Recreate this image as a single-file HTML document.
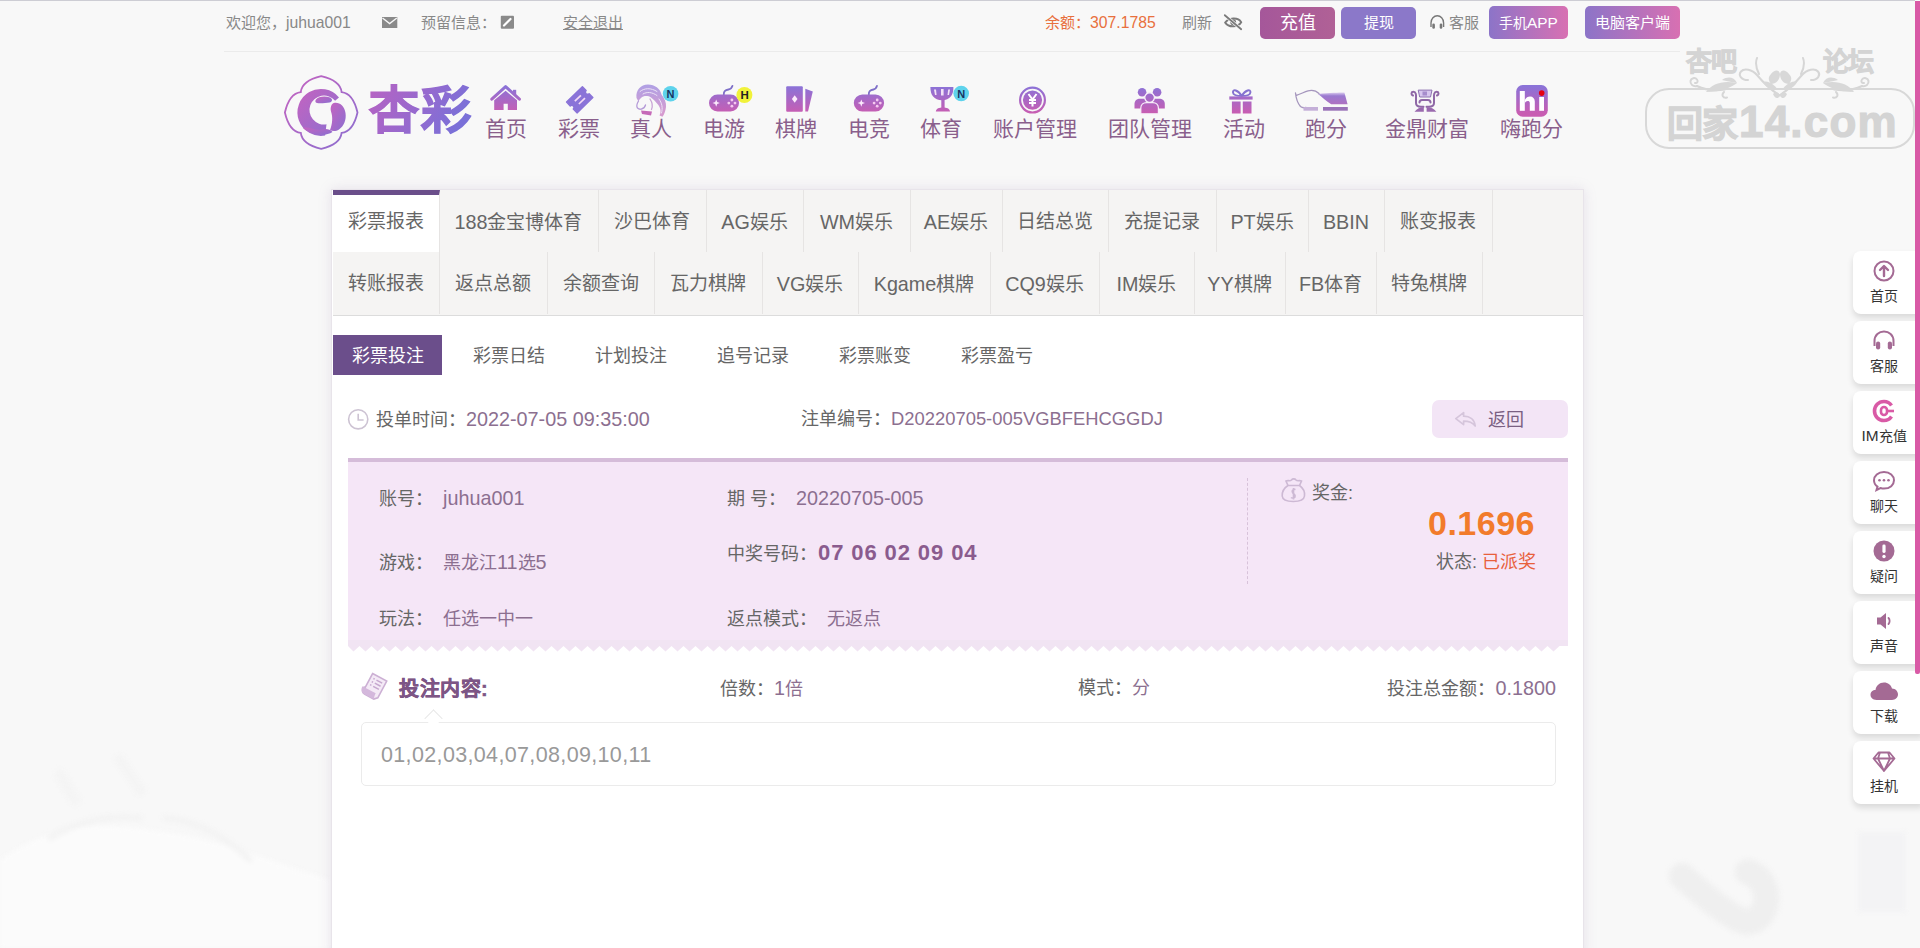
<!DOCTYPE html>
<html lang="zh-CN"><head><meta charset="utf-8">
<style>
*{margin:0;padding:0;box-sizing:border-box}
html,body{width:1920px;height:948px;overflow:hidden}
body{background:#f8f8f8;font-family:"Liberation Sans",sans-serif;position:relative;color:#666}
.a{position:absolute;white-space:nowrap}
#topline{left:0;top:0;width:1915px;height:1px;background:#cdcdd4}
#scroll{left:1915px;top:1px;width:5px;height:673px;background:#d95aa6;border-radius:0 0 2px 2px}
#topbar .a{font-size:15px;line-height:16px;top:15px;color:#888}
#topbar .L{font-size:1.05em}
#hdrline{left:224px;top:51px;width:1456px;height:1px;background:#ebebeb}
.btn{position:absolute;top:7px;height:32px;border-radius:5px;color:#fff;text-align:center;line-height:32px}
/* nav */
.nav{position:absolute;top:118px;font-size:21px;line-height:22px;color:#8a5f8c}
/* panel */
#panel{left:331px;top:189px;width:1253px;height:770px;background:#fff;border:1px solid #e8e4ea;box-shadow:0 0 12px rgba(150,120,170,.18)}
#tabs{left:333px;top:190px;width:1250px;height:126px;background:#f5f4f3;border-bottom:1px solid #dcdcdc}
.tab{position:absolute;height:62px;line-height:64px;font-size:19px;color:#666;text-align:center;border-right:1px solid #e6e4e3}
.sub{position:absolute;top:335px;height:40px;line-height:42px;font-size:18px;color:#666;text-align:center;width:109px}
.tab.act{background:#fff;border-top:5px solid #6a4e8a;line-height:54px}
.sub.act{background:#6b4e8b;color:#fff}
.lbl{font-size:18px;line-height:22px;color:#666}
.pv{color:#8c6f90}
#backbtn{left:1432px;top:400px;width:136px;height:38px;border-radius:7px;background:#f3e5f6;color:#7a5f82;font-size:18px;line-height:40px;padding-left:56px}
#ticket{left:348px;top:458px;width:1220px;height:188px;background:#f5e6f7;border-top:4px solid #d5bcd9}
#zig{left:348px;top:646px;width:1220px;height:8px;background:linear-gradient(135deg,#f5e6f7 50%,transparent 50%) 0 0/10px 8px repeat-x,linear-gradient(225deg,#f5e6f7 50%,transparent 50%) 0 0/10px 8px repeat-x}
.win{font-size:22px;color:#8a5b8e;letter-spacing:.9px;margin-left:1px}
#dash{left:1247px;top:478px;width:0;height:106px;border-left:1px dashed #d8c2da}
#prize{right:385px;top:503px;font-size:34px;line-height:40px;font-weight:bold;color:#f27b2b;letter-spacing:.5px}
#bettitle{left:399px;top:678px;font-size:20px;line-height:22px;font-weight:bold;color:#7d5585;-webkit-text-stroke:.5px #7d5585;letter-spacing:.5px}
#betbox{left:361px;top:722px;width:1195px;height:64px;border:1px solid #ebebeb;border-radius:5px;background:#fff}
#notch{left:426.5px;top:712px;width:13px;height:13px;background:#fff;border-left:1px solid #e8e8e8;border-top:1px solid #e8e8e8;transform:rotate(45deg) scaleY(1.0)}
#nums{left:381px;top:743px;font-size:21.5px;line-height:24px;color:#999;letter-spacing:.35px}
#logotxt{left:366px;top:78px;font-size:52px;line-height:62px;font-weight:900;background:linear-gradient(90deg,#bd62c0,#7a70d6);-webkit-background-clip:text;color:transparent;letter-spacing:-2px}
.side{position:absolute;left:1853px;width:70px;height:63px;background:#fff;border-radius:8px 0 0 8px;box-shadow:0 4px 6px rgba(0,0,0,.12)}
.side>span{position:absolute;left:0;width:62px;top:37px;text-align:center;font-size:14px;line-height:16px;color:#333}
.L{font-size:1.1em}
.tab .L{font-size:1.04em}
</style></head><body>
<svg class="a" style="left:0;top:0;filter:blur(2.5px)" width="1920" height="948" viewBox="0 0 1920 948">
<path d="M1682 876 C1700 892 1720 910 1740 920 C1760 928 1770 905 1765 890 C1762 880 1755 874 1748 872" fill="none" stroke="#efefef" stroke-width="26" stroke-linecap="round"/>
<rect x="1858" y="832" width="48" height="80" fill="#f3f3f5"/>
<path d="M0 860 C40 830 90 820 150 830 C200 835 240 850 330 880 V948 H0Z" fill="#fbfbfb"/>
<path d="M50 838 C80 820 110 815 140 818 M165 818 C190 820 220 832 250 860" fill="none" stroke="#f2f2f2" stroke-width="5" stroke-linecap="round"/>
<path d="M60 775 L75 800 M120 760 L140 790" fill="none" stroke="#f4f4f4" stroke-width="10" stroke-linecap="round"/>
</svg>
<div class="a" id="topline"></div>

<!-- top bar -->
<div id="topbar">
<div class="a" style="left:226px">欢迎您，<span class="L">juhua001</span></div>
<div class="a" style="left:421px">预留信息：</div>
<div class="a" style="left:563px;text-decoration:underline">安全退出</div>
<div class="a" style="left:1045px;color:#e8703e">余额：<span class="L">307.1785</span></div>
<div class="a" style="left:1182px">刷新</div>
<div class="a" style="left:1449px">客服</div>
</div>
<div class="btn" style="left:1260px;width:75px;background:linear-gradient(90deg,#a5579a,#b06196);font-size:18px;line-height:33px">充值</div>
<div class="btn" style="left:1341px;width:75px;background:#8b78c9;font-size:15px">提现</div>
<div class="btn" style="left:1489px;top:6px;height:33px;line-height:33px;width:79px;background:linear-gradient(90deg,#8c74c8,#d870b2);font-size:14px">手机<span class="L">APP</span></div>
<div class="btn" style="left:1585px;top:6px;height:33px;line-height:33px;width:95px;background:linear-gradient(90deg,#8c74c8,#d870b2);font-size:15px">电脑客户端</div>
<div class="a" id="hdrline"></div>
<svg class="a" style="left:0;top:0" width="1500" height="40" viewBox="0 0 1500 40">
<path d="M382 17 H397.3 V28 H382Z" fill="#8a8a8a"/>
<path d="M382.5 18 L389.65 23.6 L396.8 18" fill="none" stroke="#f8f8f8" stroke-width="1.3"/>
<rect x="500.8" y="15.8" width="13.2" height="12.9" rx="1" fill="#8a8a8a"/>
<path d="M504 25.5 L510.5 19" stroke="#fff" stroke-width="2.2" stroke-linecap="round"/>
<path d="M1225.2 22.6 C1228.5 17.6 1238 16.8 1241.2 22.2 C1238.2 27.2 1228.8 28 1225.2 22.6Z" fill="none" stroke="#7a7a7a" stroke-width="1.9"/>
<circle cx="1233.2" cy="22.2" r="2.9" fill="#7a7a7a"/>
<path d="M1224.8 15.2 L1241.2 29.2" stroke="#f8f8f8" stroke-width="3.2"/>
<path d="M1224.8 15.2 L1241.2 29.2" stroke="#7a7a7a" stroke-width="1.8" stroke-linecap="round"/>
<path d="M1431 27 V23 C1431 18.5 1434 15.8 1437.3 15.8 C1440.6 15.8 1443.6 18.5 1443.6 23 V27" fill="none" stroke="#777" stroke-width="1.4"/>
<rect x="1432.3" y="23.5" width="2.6" height="5.2" rx="1.3" fill="#777"/>
<rect x="1439.7" y="23.5" width="2.6" height="5.2" rx="1.3" fill="#777"/>
</svg>



<!-- logo -->
<svg class="a" style="left:281px;top:72px" width="82" height="82" viewBox="0 0 82 82">
<defs>
<linearGradient id="lg1" x1="0" y1="0" x2="1" y2="1"><stop offset="0" stop-color="#c563c0"/><stop offset="1" stop-color="#8b6fd0"/></linearGradient>
<linearGradient id="gv" x1="0" y1="0" x2="0" y2="1"><stop offset="0" stop-color="#9270d2"/><stop offset="1" stop-color="#c660b4"/></linearGradient>
<linearGradient id="gh" x1="0" y1="0" x2="1" y2="0"><stop offset="0" stop-color="#c563c0"/><stop offset="1" stop-color="#7d6fd6"/></linearGradient>
</defs>
<path d="M40.2 4.2 Q59.3 8.6 60.6 20.1 Q72.1 21.4 76.5 40.5 Q72.1 59.6 60.6 60.9 Q59.3 72.4 40.2 76.8 Q21.1 72.4 19.8 60.9 Q8.3 59.6 3.9 40.5 Q8.3 21.4 19.8 20.1 Q21.1 8.6 40.2 4.2Z" fill="none" stroke="url(#lg1)" stroke-width="1.8"/>
<path d="M58.0 25.4 A23.5 23.5 0 1 0 44.1 63.6 L45.5 52.3 A14.5 14.5 0 1 1 54.1 28.7Z" fill="url(#lg1)"/>
<path fill="url(#lg1)" d="M35 27.5 C37 24.5 44 23.8 49 25.5 C52 27 51.5 30 48.5 30.5 C45 31 39 31.5 36 31 C34 30.5 34 28.5 35 27.5Z"/>
<path fill="url(#lg1)" d="M53 31 C58.5 30 63.5 34 64.5 41 C65.5 48 63 54 58 57.5 C55 59.5 51.5 59.5 49 58 C51.5 52 52 45 50 39.5 C49 35.5 50.5 31.5 53 31Z"/>
<path fill="url(#lg1)" d="M22 56 C28 54 34 59 41 57.5 C45 56.5 49 57 51.5 60 C45 64.5 31 64 22 56Z"/>
</svg>
<svg class="a" style="left:366px;top:72px" width="118" height="68"><defs><linearGradient id="lgt" x1="0" y1="0" x2="1" y2="0.3"><stop offset="0" stop-color="#b962c2"/><stop offset="1" stop-color="#7a70d8"/></linearGradient></defs><text x="3" y="55.5" font-size="50" font-weight="700" fill="url(#lgt)" stroke="url(#lgt)" stroke-width="1.3" letter-spacing="2">杏彩</text></svg>
<svg class="a" style="left:0;top:0" width="1600" height="125" viewBox="0 0 1600 125">
<defs>
<linearGradient id="ng" gradientUnits="userSpaceOnUse" x1="0" y1="86" x2="0" y2="113"><stop offset="0" stop-color="#8a73d8"/><stop offset="1" stop-color="#c85db2"/></linearGradient>
<linearGradient id="ngl" gradientUnits="userSpaceOnUse" x1="0" y1="86" x2="0" y2="113"><stop offset="0" stop-color="#a591e0"/><stop offset="1" stop-color="#d08ac8"/></linearGradient>
</defs>
<!-- home -->
<path d="M491.8 99.2 L505.6 86.6 L519.4 99.2" fill="none" stroke="url(#ng)" stroke-width="3" stroke-linecap="round" stroke-linejoin="round"/>
<rect x="513" y="89.8" width="3.2" height="5" fill="url(#ng)"/>
<path d="M494.2 100.2 L505.6 90.8 L517 100.2 V110 H507.8 V103.8 H503.6 V110 H494.2Z" fill="url(#ng)"/>
<!-- ticket -->
<g transform="translate(579.7 99.8) rotate(-44)">
<path d="M-11 -7.5 H11 V-2.2 A2.2 2.2 0 0 0 11 2.2 V7.5 H-11 V2.2 A2.2 2.2 0 0 0 -11 -2.2Z" fill="url(#ng)" stroke="url(#ng)" stroke-width="1.5" stroke-linejoin="round"/>
<rect x="-4.5" y="-3.2" width="8.5" height="1.7" fill="#f3d9f5"/>
<rect x="-3.5" y="1.6" width="8.5" height="1.7" fill="#f3d9f5"/>
</g>
<!-- woman -->
<path opacity=".85" d="M636.5 98 C635.5 90 641 84.5 648 84.6 C655 84.8 660 88.5 661.5 94.5 C664.5 98.5 666.5 102.5 666 107 C665.5 111 664.5 114 662.5 116.8 L659.5 115.5 C661.5 111.5 660.5 107.5 657.5 104 C655.5 101.5 653.5 99.5 651 97.5 C648 95.5 643.5 95.5 641 98 C640 99 639 100 638.5 101.5Z" fill="url(#ngl)"/>
<g fill="none" stroke="#ece2f6" stroke-width="1" stroke-linecap="round">
<path d="M640 91.5 C644 88 651 87.5 657 91.5"/>
<path d="M643 94 C647 91.5 652 92 657 95.5"/>
<path d="M659 99 C662 103 663 108 661.5 113"/>
</g>
<path d="M638.5 101 C637 103.5 636 106 637.5 108 C638.5 109 640 109.5 641.5 109 C643.5 108.5 645 107 645.5 105" fill="none" stroke="#b59bd8" stroke-width="1.3" stroke-linecap="round"/>
<path d="M650 99 C652 102 653 106 651.5 109.5" fill="none" stroke="#c9a3d6" stroke-width="1.3" stroke-linecap="round"/>
<path d="M641 110.5 L652 111.5 L651 115.5 L642 114Z" fill="#c56ab8"/>
<circle cx="670.6" cy="93.8" r="7.8" fill="#5ed3ec"/>
<text x="670.6" y="97.8" font-size="11" font-weight="bold" fill="#173462" text-anchor="middle" font-family="Liberation Sans">N</text>
<!-- gamepad 1 -->
<path d="M723.8 94.5 C723.5 90.5 726 90 728.5 89.5 C731 89 732 87.5 732.5 85.8" fill="none" stroke="#7e6fc8" stroke-width="1.8" stroke-linecap="round"/>
<rect x="709" y="94.4" width="30" height="17" rx="8.5" fill="url(#ng)"/>
<path d="M716.2 99.4 L717.2 102.1 L719.9 103.1 L717.2 104.1 L716.2 106.8 L715.2 104.1 L712.5 103.1 L715.2 102.1Z" fill="#fbe8fb"/>
<g fill="#f6c9f0"><circle cx="731.9" cy="100" r="1.4"/><circle cx="731.9" cy="106.2" r="1.4"/><circle cx="728.8" cy="103.1" r="1.4"/><circle cx="735" cy="103.1" r="1.4"/></g>
<circle cx="744.4" cy="95" r="8" fill="#f1f23a"/>
<text x="744.6" y="99.2" font-size="11.5" font-weight="bold" fill="#222" text-anchor="middle" font-family="Liberation Sans">H</text>
<!-- cards -->
<path d="M805.3 88.8 L812.8 91.5 L808 111.6 L805.3 111.6Z" fill="url(#ng)"/>
<rect x="786.2" y="86.3" width="16.6" height="25.5" rx="1" fill="url(#ng)"/>
<path d="M794.7 95.2 L797.5 99 L794.7 102.8 L791.9 99Z" fill="#fbeafb"/>
<!-- gamepad 2 -->
<path d="M868.8 94.5 C868.5 90.5 871 90 873.5 89.5 C876 89 876.5 87.5 877 85.8" fill="none" stroke="#7e6fc8" stroke-width="1.8" stroke-linecap="round"/>
<rect x="853.8" y="94.4" width="30.3" height="17.2" rx="8.6" fill="url(#ng)"/>
<path d="M861.3 99.4 L862.3 102.1 L865 103.1 L862.3 104.1 L861.3 106.8 L860.3 104.1 L857.6 103.1 L860.3 102.1Z" fill="#fbe8fb"/>
<g fill="#f6c9f0"><circle cx="877.2" cy="100" r="1.4"/><circle cx="877.2" cy="106.2" r="1.4"/><circle cx="874.1" cy="103.1" r="1.4"/><circle cx="880.3" cy="103.1" r="1.4"/></g>
<!-- trophy -->
<path d="M930.4 87.1 H953.4 C953.6 95 950 100.3 942 100.3 C934 100.3 930.2 95 930.4 87.1Z" fill="url(#ng)"/>
<rect x="941.3" y="99" width="3.3" height="9.5" fill="url(#ng)"/>
<path d="M935.8 111.5 C936.5 108.5 939 107.6 942.9 107.6 C946.8 107.6 949.3 108.5 950 111.5Z" fill="url(#ng)"/>
<g fill="#f2e2f6"><path d="M934 89.5 L936 89.5 L936.6 95 L935 95Z"/><rect x="941" y="89" width="2.6" height="6.5"/><path d="M948.2 89.5 L950 89.5 L949 95 L947.5 95Z"/></g>
<circle cx="961.2" cy="93.5" r="7.8" fill="#5ed3ec"/>
<text x="961.2" y="97.5" font-size="11" font-weight="bold" fill="#173462" text-anchor="middle" font-family="Liberation Sans">N</text>
<!-- coin -->
<circle cx="1032.5" cy="100.1" r="12.4" fill="none" stroke="url(#ng)" stroke-width="2.2"/>
<circle cx="1032.5" cy="100.1" r="9.6" fill="url(#ng)"/>
<path d="M1028.5 94 L1032.5 99.5 L1036.5 94 M1032.5 99.5 V106.5 M1029 100 H1036 M1029 103 H1036" fill="none" stroke="#fff" stroke-width="2"/>
<!-- team -->
<g fill="url(#ng)">
<circle cx="1142.1" cy="92.2" r="4.3"/><path d="M1134.5 108.4 V104 C1134.5 100.5 1137 98.8 1140 98.8 H1144 C1146 98.8 1147 99.5 1147.5 100.5 V108.4Z"/>
<circle cx="1157.1" cy="92.2" r="4.3"/><path d="M1164.8 108.4 V104 C1164.8 100.5 1162.3 98.8 1159.3 98.8 H1155 C1153 98.8 1152 99.5 1151.5 100.5 V108.4Z"/>
</g>
<g fill="url(#ng)" stroke="#f8f0fa" stroke-width="1.2">
<circle cx="1149.6" cy="97.6" r="4.8"/>
<path d="M1140.8 113.8 V108 C1140.8 104.5 1143.5 102.6 1146.5 102.6 H1152.8 C1155.8 102.6 1158.4 104.5 1158.4 108 V113.8Z"/>
</g>
<!-- gift -->
<path d="M1241.7 96 C1238 90 1232.5 88.5 1233 92.5 C1233.3 95 1237 96 1241.7 96 C1246.4 96 1250.1 95 1250.4 92.5 C1250.9 88.5 1245.4 90 1241.7 96Z" fill="none" stroke="#8572d0" stroke-width="2"/>
<rect x="1229.3" y="96.4" width="23.3" height="3.2" fill="url(#ng)"/>
<rect x="1231.9" y="101.5" width="8.7" height="12" fill="url(#ng)"/>
<rect x="1242.8" y="101.5" width="8.7" height="12" fill="url(#ng)"/>
<!-- rhino -->
<defs><linearGradient id="rg" gradientUnits="userSpaceOnUse" x1="0" y1="92" x2="0" y2="105"><stop offset="0" stop-color="#e4d8f2"/><stop offset=".3" stop-color="#9a7ad0"/><stop offset="1" stop-color="#b070c0"/></linearGradient></defs>
<path d="M1318 94 C1330 92.8 1338 92.5 1344.4 92.5 L1347.6 104.3 L1331.2 104.3 C1326 101 1322.5 97.5 1318 94Z" fill="url(#rg)"/>
<path d="M1295.5 93 C1296 98 1297.5 103 1300.5 106.5 C1302 107.8 1304 108 1306 107.5 M1296 95.5 C1300 94.5 1304 92 1308 90.8 C1312 89.8 1316 90.5 1319 93.5" fill="none" stroke="#a596bd" stroke-width="1.3" stroke-linecap="round"/>
<path d="M1303.5 107 H1318 V110.7 H1303.5Z" fill="#c4afd8"/>
<path d="M1323 107 H1347.8 V110.7 H1323Z" fill="#9a72b8"/>
<!-- throne -->
<path d="M1418.2 90.1 H1432 L1430.5 97 H1419.7Z" fill="#d7c6ee" stroke="#8d72b0" stroke-width="1"/>
<rect x="1422.5" y="91.5" width="4.5" height="4" fill="#a68ccc"/>
<g fill="none" stroke="#8f68a6" stroke-width="2" stroke-linecap="round">
<path d="M1413 95.5 C1410.8 94.5 1411 91.8 1413.5 91.8 C1416 91.8 1416.2 95 1416 98 V103 C1416 105.5 1418 106.8 1421 106.8 H1423.5"/>
<path d="M1437 95.5 C1439.2 94.5 1439 91.8 1436.5 91.8 C1434 91.8 1433.8 95 1434 98 V103 C1434 105.5 1432 106.8 1429 106.8 H1426.5"/>
<path d="M1419.5 102.5 C1419.5 100.8 1420.5 100 1422 100 H1428 C1429.5 100 1430.5 100.8 1430.5 102.5"/>
</g>
<path d="M1414.5 111.7 C1417 108.5 1420 107.5 1423.8 107 V111.7Z M1436.4 111.7 C1434 108.5 1431 107.5 1426.6 107 V111.7Z" fill="#9a6aae"/>
<!-- hi -->
<rect x="1516.2" y="85.1" width="31.6" height="31.6" rx="6.5" fill="url(#ng)"/>
<rect x="1519.8" y="91" width="5" height="19.8" fill="#fff"/>
<path d="M1524.8 100 C1526 97.5 1528 96.5 1530 96.5 C1533 96.5 1534.8 98.5 1534.8 101.5 V110.8 H1529.8 V103 C1529.8 101.5 1528.8 101 1527.8 101 C1526.5 101 1525.5 101.8 1524.8 103Z" fill="#fff"/>
<rect x="1539.2" y="97" width="4.8" height="13.8" fill="#fff"/>
<circle cx="1541.7" cy="93.1" r="2.8" fill="#e60012"/>
</svg>

<!-- nav labels -->
<div class="nav" style="left:485px">首页</div>
<div class="nav" style="left:558px">彩票</div>
<div class="nav" style="left:630px">真人</div>
<div class="nav" style="left:703px">电游</div>
<div class="nav" style="left:775px">棋牌</div>
<div class="nav" style="left:848px">电竞</div>
<div class="nav" style="left:920px">体育</div>
<div class="nav" style="left:993px">账户管理</div>
<div class="nav" style="left:1108px">团队管理</div>
<div class="nav" style="left:1223px">活动</div>
<div class="nav" style="left:1305px">跑分</div>
<div class="nav" style="left:1385px">金鼎财富</div>
<div class="nav" style="left:1500px">嗨跑分</div>

<!-- panel -->
<div class="a" id="panel"></div>
<div class="a" id="tabs"></div>
<div class="tab act" style="left:333px;top:190px;width:107px">彩票报表</div>
<div class="tab" style="left:439px;top:190px;width:160px"><span class="L">188</span>金宝博体育</div>
<div class="tab" style="left:598px;top:190px;width:109px">沙巴体育</div>
<div class="tab" style="left:706px;top:190px;width:98px"><span class="L">AG</span>娱乐</div>
<div class="tab" style="left:803px;top:190px;width:108px"><span class="L">WM</span>娱乐</div>
<div class="tab" style="left:910px;top:190px;width:93px"><span class="L">AE</span>娱乐</div>
<div class="tab" style="left:1002px;top:190px;width:107px">日结总览</div>
<div class="tab" style="left:1108px;top:190px;width:109px">充提记录</div>
<div class="tab" style="left:1216px;top:190px;width:93px"><span class="L">PT</span>娱乐</div>
<div class="tab" style="left:1308px;top:190px;width:77px"><span class="L">BBIN</span></div>
<div class="tab" style="left:1384px;top:190px;width:109px">账变报表</div>
<div class="tab" style="left:333px;top:252px;width:107px">转账报表</div>
<div class="tab" style="left:439px;top:252px;width:109px">返点总额</div>
<div class="tab" style="left:547px;top:252px;width:108px">余额查询</div>
<div class="tab" style="left:654px;top:252px;width:109px">瓦力棋牌</div>
<div class="tab" style="left:762px;top:252px;width:97px"><span class="L">VG</span>娱乐</div>
<div class="tab" style="left:858px;top:252px;width:133px"><span class="L">Kgame</span>棋牌</div>
<div class="tab" style="left:990px;top:252px;width:110px"><span class="L">CQ9</span>娱乐</div>
<div class="tab" style="left:1099px;top:252px;width:96px"><span class="L">IM</span>娱乐</div>
<div class="tab" style="left:1194px;top:252px;width:92px"><span class="L">YY</span>棋牌</div>
<div class="tab" style="left:1285px;top:252px;width:92px"><span class="L">FB</span>体育</div>
<div class="tab" style="left:1376px;top:252px;width:107px">特兔棋牌</div>
<div class="sub act" style="left:333px">彩票投注</div>
<div class="sub" style="left:454px">彩票日结</div>
<div class="sub" style="left:576px">计划投注</div>
<div class="sub" style="left:698px">追号记录</div>
<div class="sub" style="left:820px">彩票账变</div>
<div class="sub" style="left:942px">彩票盈亏</div>

<!-- order row -->
<div class="a lbl" style="left:376px;top:408px">投单时间：<span class="pv L">2022-07-05 09:35:00</span></div>
<div class="a lbl" style="left:801px;top:408px">注单编号：<span class="pv" style="font-size:18.4px">D20220705-005VGBFEHCGGDJ</span></div>
<div class="a" id="backbtn">返回</div>

<!-- ticket -->
<div class="a" id="ticket"></div>
<svg class="a" style="left:0;top:0;pointer-events:none" width="1600" height="700" viewBox="0 0 1600 700"><path d="M348 640 V646 L353.5 651.5 L359.5 646 L365.5 651.5 L371.5 646 L377.5 651.5 L383.5 646 L389.5 651.5 L395.5 646 L401.5 651.5 L407.5 646 L413.5 651.5 L419.5 646 L425.5 651.5 L431.5 646 L437.5 651.5 L443.5 646 L449.5 651.5 L455.5 646 L461.5 651.5 L467.5 646 L473.5 651.5 L479.5 646 L485.5 651.5 L491.5 646 L497.5 651.5 L503.5 646 L509.5 651.5 L515.5 646 L521.5 651.5 L527.5 646 L533.5 651.5 L539.5 646 L545.5 651.5 L551.5 646 L557.5 651.5 L563.5 646 L569.5 651.5 L575.5 646 L581.5 651.5 L587.5 646 L593.5 651.5 L599.5 646 L605.5 651.5 L611.5 646 L617.5 651.5 L623.5 646 L629.5 651.5 L635.5 646 L641.5 651.5 L647.5 646 L653.5 651.5 L659.5 646 L665.5 651.5 L671.5 646 L677.5 651.5 L683.5 646 L689.5 651.5 L695.5 646 L701.5 651.5 L707.5 646 L713.5 651.5 L719.5 646 L725.5 651.5 L731.5 646 L737.5 651.5 L743.5 646 L749.5 651.5 L755.5 646 L761.5 651.5 L767.5 646 L773.5 651.5 L779.5 646 L785.5 651.5 L791.5 646 L797.5 651.5 L803.5 646 L809.5 651.5 L815.5 646 L821.5 651.5 L827.5 646 L833.5 651.5 L839.5 646 L845.5 651.5 L851.5 646 L857.5 651.5 L863.5 646 L869.5 651.5 L875.5 646 L881.5 651.5 L887.5 646 L893.5 651.5 L899.5 646 L905.5 651.5 L911.5 646 L917.5 651.5 L923.5 646 L929.5 651.5 L935.5 646 L941.5 651.5 L947.5 646 L953.5 651.5 L959.5 646 L965.5 651.5 L971.5 646 L977.5 651.5 L983.5 646 L989.5 651.5 L995.5 646 L1001.5 651.5 L1007.5 646 L1013.5 651.5 L1019.5 646 L1025.5 651.5 L1031.5 646 L1037.5 651.5 L1043.5 646 L1049.5 651.5 L1055.5 646 L1061.5 651.5 L1067.5 646 L1073.5 651.5 L1079.5 646 L1085.5 651.5 L1091.5 646 L1097.5 651.5 L1103.5 646 L1109.5 651.5 L1115.5 646 L1121.5 651.5 L1127.5 646 L1133.5 651.5 L1139.5 646 L1145.5 651.5 L1151.5 646 L1157.5 651.5 L1163.5 646 L1169.5 651.5 L1175.5 646 L1181.5 651.5 L1187.5 646 L1193.5 651.5 L1199.5 646 L1205.5 651.5 L1211.5 646 L1217.5 651.5 L1223.5 646 L1229.5 651.5 L1235.5 646 L1241.5 651.5 L1247.5 646 L1253.5 651.5 L1259.5 646 L1265.5 651.5 L1271.5 646 L1277.5 651.5 L1283.5 646 L1289.5 651.5 L1295.5 646 L1301.5 651.5 L1307.5 646 L1313.5 651.5 L1319.5 646 L1325.5 651.5 L1331.5 646 L1337.5 651.5 L1343.5 646 L1349.5 651.5 L1355.5 646 L1361.5 651.5 L1367.5 646 L1373.5 651.5 L1379.5 646 L1385.5 651.5 L1391.5 646 L1397.5 651.5 L1403.5 646 L1409.5 651.5 L1415.5 646 L1421.5 651.5 L1427.5 646 L1433.5 651.5 L1439.5 646 L1445.5 651.5 L1451.5 646 L1457.5 651.5 L1463.5 646 L1469.5 651.5 L1475.5 646 L1481.5 651.5 L1487.5 646 L1493.5 651.5 L1499.5 646 L1505.5 651.5 L1511.5 646 L1517.5 651.5 L1523.5 646 L1529.5 651.5 L1535.5 646 L1541.5 651.5 L1547.5 646 L1553.5 651.5 L1559.5 646 L1568 646 V640Z" fill="#f1e4f3"/></svg>
<div class="a lbl" style="left:379px;top:487px">账号：<span class="pv L" style="margin-left:10px">juhua001</span></div>
<div class="a lbl" style="left:379px;top:551px">游戏：<span class="pv" style="margin-left:10px">黑龙江<span class="L">11</span>选<span class="L">5</span></span></div>
<div class="a lbl" style="left:379px;top:608px">玩法：<span class="pv" style="margin-left:10px">任选一中一</span></div>
<div class="a lbl" style="left:727px;top:487px">期 号：<span class="pv L" style="margin-left:10px">20220705-005</span></div>
<div class="a lbl" style="left:727px;top:542px">中奖号码：<b class="win">07 06 02 09 04</b></div>
<div class="a lbl" style="left:727px;top:608px">返点模式：<span class="pv" style="margin-left:10px">无返点</span></div>
<div class="a" id="dash"></div>
<div class="a lbl" style="left:1312px;top:482px">奖金:</div>
<div class="a" id="prize">0.1696</div>
<div class="a lbl" style="right:384px;top:551px">状态: <span style="color:#e8603c">已派奖</span></div>

<!-- bet content -->

<svg class="a" style="left:0;top:0" width="1600" height="720" viewBox="0 0 1600 720">
<circle cx="358.2" cy="419.3" r="9.6" fill="none" stroke="#cdc3d3" stroke-width="1.6"/>
<path d="M358.2 413.8 V420 H363.6" fill="none" stroke="#cdc3d3" stroke-width="1.6"/>
<path d="M1455.8 418.6 L1463.6 412.6 V416.2 C1470 416.2 1474.6 419.6 1475.2 426 C1472.6 422.6 1469 421.2 1463.6 421.2 V424.6 Z" fill="none" stroke="#d5c5db" stroke-width="1.7" stroke-linejoin="round"/>
<g fill="none" stroke="#cdb9d4" stroke-width="1.6">
<path d="M1288 485.5 L1286 481 C1288 480 1290 481.5 1291.5 480 C1292.5 478.5 1295 478.5 1296 480 C1297.5 481.5 1299.5 480 1301.5 481 L1299.5 485.5"/>
<path d="M1288 485.5 H1299.5 C1303 488 1305 492 1304.5 496 C1304 500 1300 501.5 1293.3 501.5 C1286.5 501.5 1282.5 500 1282.2 496 C1282 492 1284 488 1288 485.5Z"/>
<path d="M1295.5 489.5 C1293 489 1291.5 490.5 1292.5 492.5 C1293.5 494 1296 494.5 1295 497 C1294 498.5 1291.5 498 1291 497.5 M1293.5 488 V499.5"/>
</g>
<g transform="translate(374.5 687) rotate(28)">
<path d="M-8 -11 H8 V8 L5 11 H-5 C-8 11 -9 9 -9 7 V5 H-8Z" fill="#f4eaf6" stroke="#ccb0d4" stroke-width="1.6"/>
<path d="M-11 5 H4 C4 8 4.5 10.5 6 11 H-6 C-9 11 -11 9 -11 5Z" fill="#d4b8dc"/>
<g stroke="#c6a8cf" stroke-width="1.5"><path d="M-5 -7 H-3.5 M-1.5 -7 H5 M-5 -3.5 H-3.5 M-1.5 -3.5 H5 M-5 0 H-3.5 M-1.5 0 H5"/></g>
</g>
</svg>
<div class="a" id="bettitle">投注内容:</div>
<div class="a lbl" style="left:720px;top:677px">倍数：<span class="pv"><span class="L">1</span>倍</span></div>
<div class="a lbl" style="left:1078px;top:677px">模式：<span class="pv">分</span></div>
<div class="a lbl" style="right:364px;top:677px">投注总金额：<span class="pv L">0.1800</span></div>
<div class="a" id="betbox"></div>
<div class="a" id="notch"></div>
<div class="a" id="nums">01,02,03,04,07,08,09,10,11</div>


<!-- watermark -->
<div class="a" style="left:1686px;top:46px;font-size:26px;line-height:32px;font-weight:bold;color:#d4d4d4;-webkit-text-stroke:1px #d4d4d4;letter-spacing:-1px">杏吧</div>
<div class="a" style="left:1823px;top:46px;font-size:26px;line-height:32px;font-weight:bold;color:#d4d4d4;-webkit-text-stroke:1px #d4d4d4;letter-spacing:-1px">论坛</div>
<svg class="a" style="left:1640px;top:50px" width="280" height="55" viewBox="1640 50 280 55">
<g fill="none" stroke="#d6d6d6" stroke-width="2" stroke-linecap="round">
<path d="M1697 86 C1693 87 1690 84 1690.5 81 C1691 78 1695 77 1697 79.5 C1698.5 81.5 1697 83.5 1695 83"/>
<path d="M1862 86 C1866 87 1869 84 1868.5 81 C1868 78 1864 77 1862 79.5 C1860.5 81.5 1862 83.5 1864 83"/>
<path d="M1697 86 C1705 90 1715 91 1725 89.5 M1862 86 C1854 90 1844 91 1834 89.5"/>
<path d="M1748 80 C1741 80 1738 75 1741 71.5 C1744 68 1752 69 1757 75 C1762 81 1768 88 1779 95"/>
<path d="M1811 80 C1818 80 1821 75 1818 71.5 C1815 68 1807 69 1802 75 C1797 81 1791 88 1780 95"/>
<path d="M1759 74 C1756 68 1755 63 1757 58 M1801 74 C1804 68 1805 63 1803 58"/>
<path d="M1724 92 C1721 95 1723 98.5 1727 97.5 M1836 92 C1839 95 1837 98.5 1833 97.5"/>
</g>
<g fill="#d8d8d8">
<path d="M1706 92 C1712 83 1724 80 1737 83 C1732 87 1722 92 1706 92Z"/>
<path d="M1722 80 C1728 76 1734 77 1737 83 C1731 82 1726 81 1722 80Z"/>
<path d="M1854 92 C1848 83 1836 80 1823 83 C1828 87 1838 92 1854 92Z"/>
<path d="M1838 80 C1832 76 1826 77 1823 83 C1829 82 1834 81 1838 80Z"/>
<path d="M1771 74 C1774 70 1779 69 1780 74 C1780 80 1776 84 1771 84 C1768 80 1768 77 1771 74Z"/>
<path d="M1789 74 C1786 70 1781 69 1780 74 C1780 80 1784 84 1789 84 C1792 80 1792 77 1789 74Z"/>
<path d="M1763 82 C1768 80 1774 84 1778 90 C1771 90 1765 87 1763 82Z"/>
<path d="M1797 82 C1792 80 1786 84 1782 90 C1789 90 1795 87 1797 82Z"/>
<path d="M1773 94 C1776 91 1779 92 1780 96 C1778 99 1775 99 1773 94Z M1787 94 C1784 91 1781 92 1780 96 C1782 99 1785 99 1787 94Z"/>
</g>
</svg>
<div class="a" style="left:1645px;top:88px;width:270px;height:61px;border:2.5px solid #d8d8d8;border-radius:24px"></div>
<div class="a" style="left:1667px;top:101px;font-size:36px;line-height:42px;font-weight:bold;color:#d4d4d4;-webkit-text-stroke:1.2px #d4d4d4;letter-spacing:-1px">回家<span style="font-size:44px;letter-spacing:1.2px;margin-left:2px">14.com</span></div>
<div class="side" style="top:251px"><svg width="62" height="36" style="position:absolute;left:0;top:0"><circle cx="31" cy="20" r="9.5" fill="none" stroke="#a46a94" stroke-width="2"/><path d="M31 25 V15.5 M27 19 L31 15 L35 19" fill="none" stroke="#a46a94" stroke-width="2.4" stroke-linecap="round" stroke-linejoin="round"/></svg><span>首页</span></div>
<div class="side" style="top:321px"><svg width="62" height="36" style="position:absolute;left:0;top:0"><path d="M21.5 25 V20 C21.5 14 26 10.5 31 10.5 C36 10.5 40.5 14 40.5 20 V25" fill="none" stroke="#a46a94" stroke-width="2"/><rect x="23" y="20.5" width="4.2" height="8" rx="2.1" fill="#a46a94"/><rect x="34.8" y="20.5" width="4.2" height="8" rx="2.1" fill="#a46a94"/></svg><span>客服</span></div>
<div class="side" style="top:391px"><svg width="62" height="36" style="position:absolute;left:0;top:0"><path d="M38.5 14.5 C36.5 11.5 34 10.5 31 10.5 C25.5 10.5 21.5 14.8 21.5 20 C21.5 25.2 25.5 29.5 31 29.5 C34 29.5 36.5 28.5 38.5 25.5" fill="none" stroke="#d95aa6" stroke-width="3.6"/><rect x="28" y="16" width="6" height="8" rx="3" fill="none" stroke="#d95aa6" stroke-width="2.6"/><path d="M33 20 H41" stroke="#d95aa6" stroke-width="2.6"/></svg><span><span class="L">IM</span>充值</span></div>
<div class="side" style="top:461px"><svg width="62" height="36" style="position:absolute;left:0;top:0"><path d="M31 11 C25 11 21 14.8 21 19.3 C21 22 22.3 24.2 24.5 25.6 L23.5 29 L27.5 27 C28.6 27.4 29.8 27.6 31 27.6 C37 27.6 41 23.8 41 19.3 C41 14.8 37 11 31 11Z" fill="none" stroke="#a46a94" stroke-width="2"/><circle cx="26.5" cy="19.3" r="1.3" fill="#a46a94"/><circle cx="31" cy="19.3" r="1.3" fill="#a46a94"/><circle cx="35.5" cy="19.3" r="1.3" fill="#a46a94"/></svg><span>聊天</span></div>
<div class="side" style="top:531px"><svg width="62" height="36" style="position:absolute;left:0;top:0"><circle cx="31" cy="20" r="10.5" fill="#a46a94"/><rect x="29.4" y="13.5" width="3.2" height="8.5" rx="1.4" fill="#fff"/><circle cx="31" cy="25.5" r="1.7" fill="#fff"/></svg><span>疑问</span></div>
<div class="side" style="top:601px"><svg width="62" height="36" style="position:absolute;left:0;top:0"><path d="M24 16.5 H27.5 L33 12 V28 L27.5 23.5 H24Z" fill="#a46a94"/><path d="M35.5 17 C37 18.5 37 21.5 35.5 23" fill="none" stroke="#a46a94" stroke-width="1.8" stroke-linecap="round"/></svg><span>声音</span></div>
<div class="side" style="top:671px"><svg width="62" height="36" style="position:absolute;left:0;top:0"><path d="M23.5 29 C19.5 29 17.5 26.5 17.5 23.8 C17.5 21 19.8 19 22.5 19 C23 14.8 26.5 11.5 31 11.5 C35 11.5 38 14 39 17.5 C42.5 17.5 45 20.3 45 23.3 C45 26.5 42.5 29 39 29Z" fill="#a46a94"/></svg><span>下载</span></div>
<div class="side" style="top:741px"><svg width="62" height="36" style="position:absolute;left:0;top:0"><path d="M25.5 11.5 H36.5 L41.5 17.5 L31 30 L20.5 17.5Z M20.5 17.5 H41.5 M27 11.5 L25 17.5 L31 30 L37 17.5 L35 11.5" fill="none" stroke="#a46a94" stroke-width="1.8" stroke-linejoin="round"/></svg><span>挂机</span></div>
<div class="a" id="scroll"></div>
</body></html>
